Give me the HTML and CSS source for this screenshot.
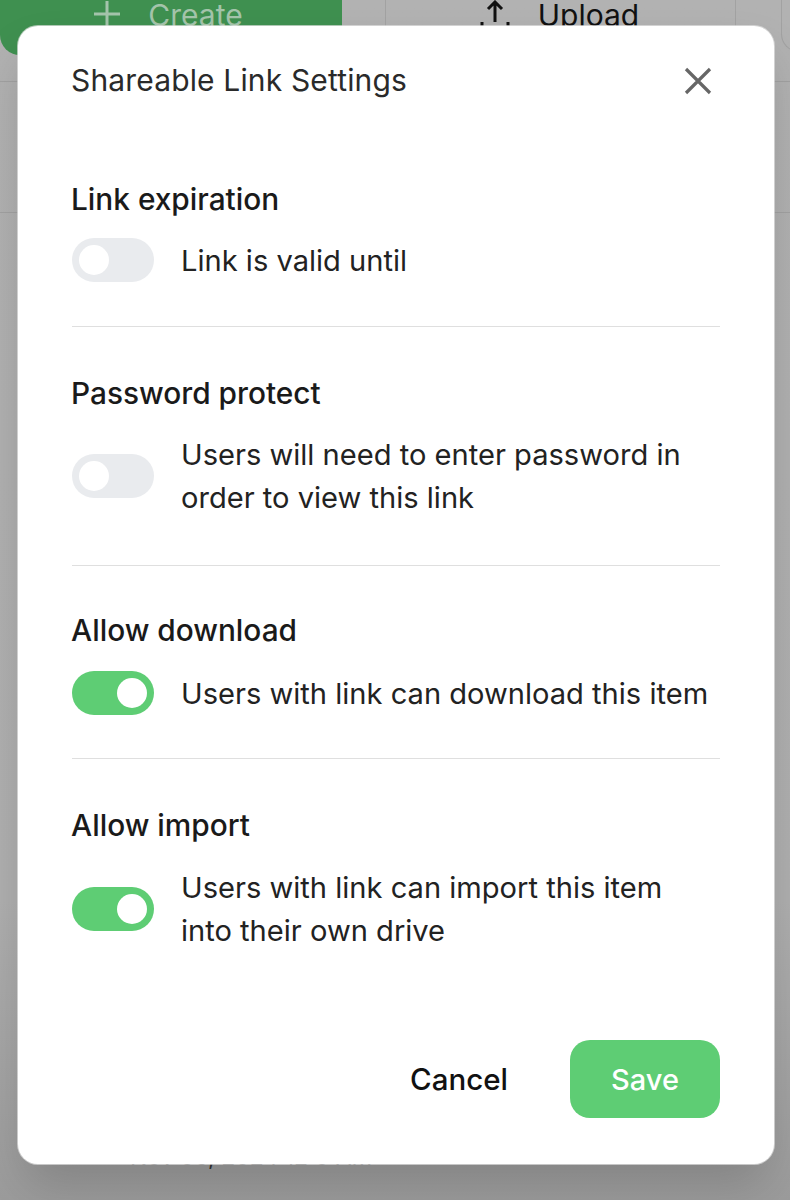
FILE: index.html
```html
<!DOCTYPE html>
<html lang="en">
<head>
<meta charset="utf-8">
<title>Shareable Link Settings</title>
<link rel="stylesheet" href="styles.css">
</head>
<body>
<div class="page">
  <div class="topbar">
    <div class="btn-create">
      <svg class="plus" width="28" height="28" viewBox="0 0 28 28"><path d="M14 1V27M1 14H27" stroke="#a4c4ab" stroke-width="3" fill="none"/></svg>
      <span>Create</span>
    </div>
    <div class="btn-upload">
      <svg class="up" width="30" height="26" viewBox="0 0 30 26"><path d="M15 22V2M8 9L15 2L22 9" stroke="#111" stroke-width="3" fill="none"/><path d="M2 22V26M28 22V26" stroke="#111" stroke-width="3" fill="none"/></svg>
      <span>Upload</span>
    </div>
    <div class="btn-more"></div>
  </div>
  <div class="band"></div>
  <div class="date">Nov 06, 2024 12:0 AM</div>

  <div class="modal">
    <div class="modal-head">
      <h1>Shareable Link Settings</h1>
      <svg class="close" width="28" height="28" viewBox="0 0 28 28"><path d="M2 2L26 26M26 2L2 26" stroke="#666" stroke-width="3.2" fill="none"/></svg>
    </div>

    <section class="group first">
      <h2>Link expiration</h2>
      <div class="row"><span class="toggle"></span><p>Link is valid until</p></div>
    </section>
    <section class="group">
      <h2>Password protect</h2>
      <div class="row tall"><span class="toggle"></span><p>Users will need to enter password in<br>order to view this link</p></div>
    </section>
    <section class="group tight">
      <h2>Allow download</h2>
      <div class="row"><span class="toggle on"></span><p>Users with link can download this item</p></div>
    </section>
    <section class="group last">
      <h2>Allow import</h2>
      <div class="row"><span class="toggle on"></span><p>Users with link can import this item<br>into their own drive</p></div>
    </section>

    <div class="actions">
      <span class="cancel">Cancel</span>
      <span class="save">Save</span>
    </div>
  </div>
</div>
</body>
</html>
```

FILE: styles.css
```css
html, body {
  margin: 0;
  padding: 0;
}
body {
  font-family: "Inter", "Liberation Sans", sans-serif;
  color: #1a1a1a;
}
.page {
  position: relative;
  width: 790px;
  height: 1200px;
  overflow: hidden;
  background: linear-gradient(#b2b2b2 0, #b0b0b0 900px, #9c9c9c 1200px);
}
.topbar {
  display: flex;
  height: 81px;
  border-bottom: 1px solid #a2a2a2;
}
.btn-create {
  width: 342px;
  height: 55px;
  flex: none;
  display: flex;
  justify-content: center;
  gap: 27px;
  box-sizing: border-box;
  padding: 0 6px 0 0;
  background: #3f9050;
  border-radius: 0 0 0 20px;
  color: #a4c4ab;
  font-size: 30px;
  font-weight: 400;
  line-height: 30px;
}
.btn-upload {
  width: 351px;
  height: 81px;
  flex: none;
  margin-left: 43px;
  display: flex;
  justify-content: center;
  gap: 28px;
  box-sizing: border-box;
  padding-right: 2px;
  border-left: 1px solid #a2a2a2;
  border-right: 1px solid #a2a2a2;
  color: #111;
  font-size: 30px;
  line-height: 30px;
}
.btn-more {
  width: 40px;
  height: 52px;
  flex: none;
  margin-left: 45px;
  box-sizing: border-box;
  border-left: 1px solid #a2a2a2;
  border-bottom: 1px solid #a2a2a2;
  border-radius: 0 0 0 18px;
}
.band {
  height: 130px;
  border-bottom: 1px solid #a2a2a2;
}
.date {
  margin: 929px 0 0 130px;
  font-size: 23px;
  line-height: 30px;
  color: #333;
}
.modal {
  position: absolute;
  left: 18px;
  top: 26px;
  width: 756px;
  height: 1138px;
  box-sizing: border-box;
  padding: 0 54px;
  background: #fff;
  border-radius: 20px;
  box-shadow: 0 0 0 1px rgba(225,225,225,.7), 0 26px 50px -6px rgba(0,0,0,.18);
  display: flex;
  flex-direction: column;
}
.modal-head {
  height: 109px;
  display: flex;
  align-items: center;
  justify-content: space-between;
  padding: 0 8px 2px 0;
  box-sizing: border-box;
}
.close {
  margin-top: 2px;
}
.modal-head h1 {
  margin: 0 0 0 -1px;
  font-size: 30px;
  font-weight: 400;
  line-height: 40px;
  color: #2a2a2a;
  letter-spacing: 0.15px;
}
.group {
  padding: 45px 0 44px;
  border-bottom: 1.5px solid #dfdfdf;
}
.group.first {
  padding-top: 43px;
}
.group.tight {
  padding: 43px 0 43px;
}
.group.last {
  border-bottom: 0;
  padding-bottom: 0;
}
.group h2 {
  margin: 0 0 18px -1px;
  font-size: 29.8px;
  font-weight: 450;
  line-height: 43px;
  color: #1a1a1a;
}
.group.first h2 {
  margin-bottom: 17px;
}
.group.tight h2,
.group.last h2 {
  margin-bottom: 19px;
}
.row {
  display: flex;
  align-items: center;
  gap: 27px;
}
.row.tall {
  margin-bottom: 2px;
}
.row p {
  margin: 0;
  font-size: 29.1px;
  font-weight: 400;
  line-height: 43px;
  color: #222;
}
.toggle {
  position: relative;
  flex: none;
  width: 82px;
  height: 44px;
  border-radius: 22px;
  background: #e9ebee;
}
.toggle::after {
  content: "";
  position: absolute;
  left: 7px;
  top: 7px;
  width: 30px;
  height: 30px;
  border-radius: 50%;
  background: #fff;
}
.toggle.on {
  background: #5ecd74;
}
.toggle.on::after {
  left: 45px;
}
.actions {
  margin-top: auto;
  margin-bottom: 46px;
  display: flex;
  align-items: center;
  justify-content: flex-end;
  gap: 62px;
}
.cancel {
  font-size: 29.5px;
  font-weight: 450;
  color: #111;
}
.save {
  width: 150px;
  height: 78px;
  border-radius: 20px;
  background: #5ecd74;
  color: #fff;
  font-size: 29px;
  font-weight: 500;
  display: flex;
  align-items: center;
  justify-content: center;
}
```
